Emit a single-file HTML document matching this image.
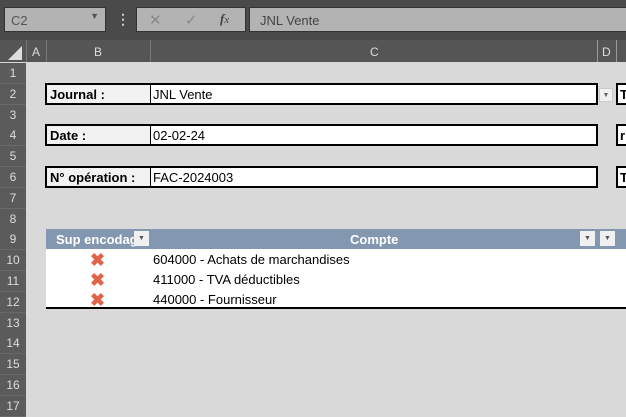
<!DOCTYPE html><html><head><style>
body{margin:0;width:626px;height:408px;overflow:hidden;background:#d9d9d9;font-family:"Liberation Sans",sans-serif;position:relative}
.a{position:absolute;box-sizing:border-box}
.rh{position:absolute;left:0;width:26px;height:21px;background:#5b5b5b;color:#ddd;font-size:12px;text-align:center;line-height:21px;border-bottom:1px solid #6a6a6a;box-sizing:border-box}
.t{font-family:"Liberation Sans",sans-serif;font-size:13px}
</style></head><body>
<div class="a" style="left:0;top:0;width:626px;height:40px;background:#4a4a4a"></div>
<div class="a" style="left:4px;top:7px;width:102px;height:25px;background:#b3b3b3;border:1px solid #333;color:#555;font-size:13px;padding:5px 6px">C2<span style="position:absolute;right:6px;top:3px;font-size:9px;color:#555">▼</span></div>
<div class="a" style="left:116px;top:11px;color:#ccc;font-size:14px;font-weight:bold">⋮</div>
<div class="a" style="left:136px;top:7px;width:110px;height:25px;background:#b3b3b3;border:1px solid #333;color:#888;font-size:15px"><span style="position:absolute;left:12px;top:3px">✕</span><span style="position:absolute;left:48px;top:3px">✓</span><span style="position:absolute;left:83px;top:3px;font-style:italic;font-family:'Liberation Serif';color:#444;font-size:13px"><b>f</b><small>x</small></span></div>
<div class="a" style="left:249px;top:7px;width:377px;height:25px;background:#b3b3b3;border:1px solid #333;border-right:none;color:#444;font-size:13px;padding:5px 10px">JNL Vente</div>
<div class="a" style="left:0;top:40px;width:626px;height:22px;background:#555"></div>
<div class="a" style="left:8px;top:46px;width:0;height:0;border-left:14px solid transparent;border-bottom:14px solid #ddd"></div>
<div class="a" style="left:26px;top:40px;width:1px;height:22px;background:#777"></div>
<div class="a" style="left:46px;top:40px;width:1px;height:22px;background:#777"></div>
<div class="a" style="left:150px;top:40px;width:1px;height:22px;background:#777"></div>
<div class="a" style="left:597px;top:40px;width:1px;height:22px;background:#999"></div>
<div class="a" style="left:616px;top:40px;width:1px;height:22px;background:#999"></div>
<div class="a" style="left:32px;top:45px;color:#ddd;font-size:12px">A</div>
<div class="a" style="left:94px;top:45px;color:#ddd;font-size:12px">B</div>
<div class="a" style="left:370px;top:45px;color:#ddd;font-size:12px">C</div>
<div class="a" style="left:602px;top:45px;color:#ddd;font-size:12px">D</div>
<div class="rh" style="top:63px">1</div><div class="rh" style="top:84px">2</div><div class="rh" style="top:105px">3</div><div class="rh" style="top:125px">4</div><div class="rh" style="top:146px">5</div><div class="rh" style="top:167px">6</div><div class="rh" style="top:188px">7</div><div class="rh" style="top:209px">8</div><div class="rh" style="top:229px">9</div><div class="rh" style="top:250px">10</div><div class="rh" style="top:271px">11</div><div class="rh" style="top:292px">12</div><div class="rh" style="top:313px">13</div><div class="rh" style="top:333px">14</div><div class="rh" style="top:354px">15</div><div class="rh" style="top:375px">16</div><div class="rh" style="top:396px">17</div>

<div class="a t" style="left:45px;top:83px;width:553px;height:22px;border:2px solid #000;background:#fff"><div class="a" style="left:0;top:0;width:104px;height:18px;background:#f2f2f2;border-right:1px solid #000;font-weight:bold;padding:2px 3px">Journal :</div><div class="a" style="left:106px;top:2px">JNL Vente</div></div>
<div class="a" style="left:599px;top:88px;width:14px;height:14px;background:#f0f0f0;border:1px solid #ccc;font-size:7px;color:#666;text-align:center;line-height:13px">▼</div>
<div class="a t" style="left:616px;top:83px;width:12px;height:22px;border:2px solid #000;background:#fff;font-weight:bold;padding:2px 2px">T</div>

<div class="a t" style="left:45px;top:124px;width:553px;height:22px;border:2px solid #000;background:#fff"><div class="a" style="left:0;top:0;width:104px;height:18px;background:#f2f2f2;border-right:1px solid #000;font-weight:bold;padding:2px 3px">Date :</div><div class="a" style="left:106px;top:2px">02-02-24</div></div>
<div class="a t" style="left:616px;top:124px;width:12px;height:22px;border:2px solid #000;background:#fff;font-weight:bold;padding:2px 2px">r</div>

<div class="a t" style="left:45px;top:166px;width:553px;height:22px;border:2px solid #000;background:#fff"><div class="a" style="left:0;top:0;width:104px;height:18px;background:#f2f2f2;border-right:1px solid #000;font-weight:bold;padding:2px 3px">N° opération :</div><div class="a" style="left:106px;top:2px">FAC-2024003</div></div>
<div class="a t" style="left:616px;top:166px;width:12px;height:22px;border:2px solid #000;background:#fff;font-weight:bold;padding:2px 2px">T</div>

<div class="a" style="left:46px;top:229px;width:580px;height:20px;background:#8497b0"></div>
<div class="a t" style="left:56px;top:232px;color:#fff;font-weight:bold">Sup encodag</div>
<div class="a" style="left:134px;top:231px;width:15px;height:15px;background:#f0f0f0;font-size:7px;color:#555;text-align:center;line-height:15px">▼</div>
<div class="a t" style="left:350px;top:232px;color:#fff;font-weight:bold">Compte</div>
<div class="a" style="left:580px;top:231px;width:15px;height:15px;background:#f0f0f0;font-size:7px;color:#555;text-align:center;line-height:15px">▼</div>
<div class="a" style="left:600px;top:231px;width:15px;height:15px;background:#f0f0f0;font-size:7px;color:#555;text-align:center;line-height:15px">▼</div>
<div class="a" style="left:46px;top:249px;width:580px;height:60px;background:#fff;border-bottom:2px solid #000"></div>
<div class="a t" style="left:153px;top:252px">604000 - Achats de marchandises</div>
<div class="a t" style="left:153px;top:272px">411000 - TVA déductibles</div>
<div class="a t" style="left:153px;top:292px">440000 - Fournisseur</div>
<div class="a" style="left:90px;top:250px;color:#e0644a;font-size:18px;font-weight:bold;line-height:20px">✖</div>
<div class="a" style="left:90px;top:270px;color:#e0644a;font-size:18px;font-weight:bold;line-height:20px">✖</div>
<div class="a" style="left:90px;top:290px;color:#e0644a;font-size:18px;font-weight:bold;line-height:20px">✖</div>
</body></html>
